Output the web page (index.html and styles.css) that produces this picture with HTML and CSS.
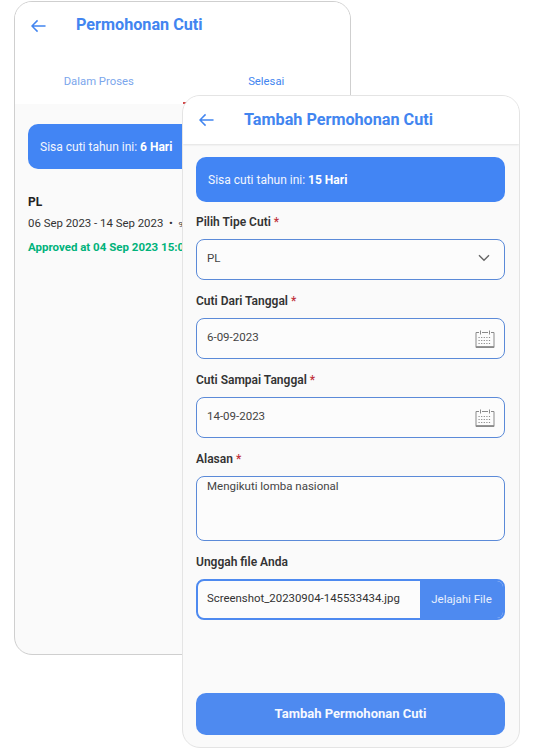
FILE: index.html
```html
<!DOCTYPE html>
<html lang="id">
<head>
<meta charset="utf-8">
<title>Permohonan Cuti</title>
<link rel="stylesheet" href="styles.css">
</head>
<body>
<section class="phone phone-back">
  <header class="head head-back">
    <svg class="back-icon" viewBox="0 0 16 14" width="15" height="14"><path d="M15.5 7H1M7 1 1 7l6 6" fill="none" stroke="#4285f0" stroke-width="1.6"/></svg>
    <h1 class="title">Permohonan Cuti</h1>
  </header>
  <nav class="tabs">
    <span class="tab tab-muted">Dalam Proses</span>
    <span class="tab tab-active">Selesai</span>
  </nav>
  <div class="tab-line"></div>
  <div class="body-back">
    <div class="quota">Sisa cuti tahun ini: <b>6 Hari</b></div>
    <div class="leave">
      <div class="leave-type">PL</div>
      <div class="leave-date">06 Sep 2023 - 14 Sep 2023 &nbsp;•&nbsp; <small>9 Hari</small></div>
      <div class="leave-status">Approved at 04 Sep 2023 15:00</div>
    </div>
  </div>
</section>

<section class="phone phone-front">
  <header class="head head-front">
    <svg class="back-icon" viewBox="0 0 16 14" width="15" height="14"><path d="M15.5 7H1M7 1 1 7l6 6" fill="none" stroke="#4285f0" stroke-width="1.6"/></svg>
    <h1 class="title">Tambah Permohonan Cuti</h1>
  </header>
  <div class="body-front">
    <div class="quota">Sisa cuti tahun ini: <b>15 Hari</b></div>
    <div class="label">Pilih Tipe Cuti <em>*</em></div>
    <div class="field"><span>PL</span>
      <svg viewBox="0 0 12 8" width="12" height="8"><path d="M1 1.2 6 6.2l5-5" fill="none" stroke="#666" stroke-width="1.4"/></svg>
    </div>
    <div class="label">Cuti Dari Tanggal <em>*</em></div>
    <div class="field"><span>6-09-2023</span>
      <svg class="cal" viewBox="0 0 20 20" width="20" height="20"><use href="#cal"/></svg>
    </div>
    <div class="label">Cuti Sampai Tanggal <em>*</em></div>
    <div class="field"><span>14-09-2023</span>
      <svg class="cal" viewBox="0 0 20 20" width="20" height="20"><use href="#cal"/></svg>
    </div>
    <div class="label">Alasan <em>*</em></div>
    <div class="field field-area"><span>Mengikuti lomba nasional</span></div>
    <div class="label">Unggah file Anda</div>
    <div class="file">
      <span class="file-name">Screenshot_20230904-145533434.jpg</span>
      <span class="file-btn">Jelajahi File</span>
    </div>
    <button class="submit" type="button">Tambah Permohonan Cuti</button>
  </div>
</section>

<svg class="defs" width="0" height="0">
  <symbol id="cal" viewBox="0 0 20 20">
    <path d="M4 3.500H1v15h18v-15h-3M7 3.500h6" fill="none" stroke="#8a8a8a" stroke-width="1"/>
    <path d="M5.500 1.500v4M14.500 1.500v4" fill="none" stroke="#8a8a8a" stroke-width="1"/>
    <path d="M1 17.800h18" stroke="#8a8a8a" stroke-width="1.400"/>
    <path d="M3.500 8.500h13M3.500 11.500h13M3.500 14.500h13" stroke="#8a8a8a" stroke-width="1" stroke-dasharray="1.200 1.400" fill="none"/>
  </symbol>
</svg>
</body>
</html>
```
FILE: styles.css
```css
* { box-sizing: border-box; }
html, body { margin: 0; height: 100%; background: #fff; overflow: hidden; }
body { position: relative; font-family: Roboto, "Liberation Sans", sans-serif; color: #222; }
.defs { position: absolute; }

.phone {
  position: absolute;
  overflow: hidden;
  border-radius: 18px;
  background: #fafafa;
}
.phone-back {
  left: 14px; top: 1px; width: 337px; height: 654px;
  border: 1px solid #cfcfcf;
}
.phone-front {
  left: 182px; top: 95px; width: 338px; height: 653px;
  border: 1px solid #e4e4e4;
}

.head { display: flex; align-items: center; background: #fff; }
.head-back { height: 47px; padding-left: 16px; }
.head-front { height: 48px; padding-left: 16px; box-shadow: 0 1px 2px rgba(0,0,0,.1); position: relative; }
.back-icon { flex: none; }
.title { margin: 0 0 0 30px; font-size: 16.200px; font-weight: 700; color: #4285f0; line-height: 1; }

.tabs { display: flex; height: 55px; background: #fff; padding-top: 25px; }
.tab { width: 50%; text-align: center; font-size: 11.300px; line-height: 16px; font-weight: 400; }
.tab-muted { color: #7ba6ec; }
.tab-active { color: #4285f0; }
.tab-line { height: 2px; margin-top: -2px; margin-left: 50%; background: #d24a4a; position: relative; }

.body-back { padding: 20px 14px 0 13px; }
.quota {
  display: flex; align-items: center; white-space: pre;
  height: 45px; padding-left: 12px;
  border-radius: 10px;
  background: #4285f4;
  color: #f2f6fe;
  font-size: 12px;
}
.quota b { font-weight: 700; color: #fff; }
.body-front .quota { margin-bottom: -1px; }

.leave { margin-top: 26px; font-size: 11.400px; white-space: nowrap; }
.leave-type { font-weight: 700; font-size: 12px; line-height: 14px; color: #222; }
.leave-date { margin-top: 7px; line-height: 14px; color: #333; }
.leave-date small { font-size: 8px; }
.leave-status { margin-top: 8px; line-height: 14px; font-weight: 700; color: #00b27a; font-size: 11.500px; }

.body-front { padding: 13px 14px 0 13px; }
.label {
  margin-top: 13px; height: 25px;
  font-size: 12px; line-height: 16px; font-weight: 600; color: #333;
}
.label em { font-style: normal; color: #c0323c; font-weight: 500; }
.field {
  display: flex; align-items: center; justify-content: space-between;
  height: 41px; padding: 0 14px 3px 10px;
  border: 1px solid #5b8ad8;
  border-radius: 8px;
  background: #fcfcfc;
  font-size: 11.500px; color: #444;
}
.field .cal { margin-right: -5px; margin-top: 3px; }
.field-area { height: 65px; align-items: flex-start; padding-top: 2px; }
.file {
  display: flex; height: 41px;
  border: 2px solid #4e8af0;
  border-radius: 8px;
  overflow: hidden;
  background: #fcfcfc;
  font-size: 11.400px;
}
.file-name { flex: 1; display: flex; align-items: center; padding: 0 0 4px 9px; color: #333; }
.file-btn {
  flex: none; width: 83px; padding-bottom: 2px;
  display: flex; align-items: center; justify-content: center;
  background: #4e8af0; color: #e9f0fd; font-size: 11.500px;
}
.submit {
  display: block; width: 100%; height: 42px;
  margin-top: 73px; padding: 0 0 2px;
  border: 0; border-radius: 10px;
  background: #4e8af0; color: #f6f9ff;
  font-family: inherit; font-size: 13px; font-weight: 700;
}
```
